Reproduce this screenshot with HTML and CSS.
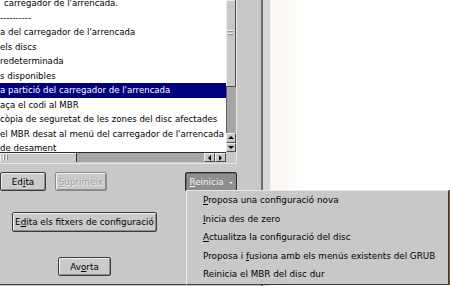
FILE: index.html
```html
<!DOCTYPE html>
<html>
<head>
	<title>Carregador de l'arrencada</title>
	<link rel="stylesheet" href="styles.css">
</head>
<body>
	<div class="window">
		<div class="left">
			<div class="listframe">
				<div class="listview">
					<div class="rows">
						<div class="row indent">carregador de l'arrencada.</div>
						<div class="row">----------</div>
						<div class="row">a del carregador de l'arrencada</div>
						<div class="row">els discs</div>
						<div class="row">redeterminada</div>
						<div class="row">s disponibles</div>
						<div class="row selected">a partició del carregador de l'arrencada</div>
						<div class="row">aça el codi al MBR</div>
						<div class="row">còpia de seguretat de les zones del disc afectades</div>
						<div class="row">el MBR desat al menú del carregador de l'arrencada</div>
						<div class="row">de desament</div>
					</div>
				</div>
				<div class="vscroll">
					<div class="vthumb"><span class="grip-h"></span></div>
					<div class="vtrough"></div>
					<div class="arrow"><span class="tri up"></span></div>
					<div class="arrow"><span class="tri down"></span></div>
				</div>
				<div class="hscroll">
					<div class="hthumb"><span class="grip-v"></span></div>
					<div class="htrough"></div>
					<div class="arrow"><span class="tri lft"></span></div>
					<div class="arrow"><span class="tri rgt"></span></div>
				</div>
				<div class="corner"></div>
			</div>
			<div class="actions">
				<div class="row-top">
					<button class="btn btn-edit">Ed<u>i</u>ta</button>
					<button class="btn btn-del" disabled><u>S</u>uprimeix</button>
					<button class="btn btn-restart"><u>R</u>einicia <span class="caret"></span></button>
				</div>
				<div class="row-mid">
					<button class="btn btn-files">E<u>d</u>ita els fitxers de configuració</button>
				</div>
				<div class="row-bottom">
					<button class="btn btn-abort">Av<u>o</u>rta</button>
				</div>
			</div>
		</div>
		<div class="sash"></div>
		<div class="pane"></div>

		<div class="menu">
			<div class="item"><u>P</u>roposa una configuració nova</div>
			<div class="item"><u>I</u>nicia des de zero</div>
			<div class="item"><u>A</u>ctualitza la configuració del disc</div>
			<div class="item">Proposa i <u>f</u>usiona amb els menús existents del GRUB</div>
			<div class="item">Reinicia el MBR del disc dur</div>
		</div>
	</div>
</body>
</html>
```

FILE: styles.css
```css
body {
	margin: 0;
	font-family: "DejaVu Sans", sans-serif;
	font-size: 8.8px;
	color: #000;
	overflow: hidden;
}
.window {
	position: relative;
	display: flex;
	width: 450px;
	height: 286px;
	background-color: #c8c8c8;
	overflow: hidden;
}
.left {
	width: 261px;
	display: flex;
	flex-direction: column;
	border-bottom: 1px solid #3c3c3c;
	box-sizing: border-box;
	height: 285px;
}
.listframe {
	display: grid;
	grid-template-columns: 226px 10px;
	grid-template-rows: 152px 10px;
	width: 236px;
	border-right: 1px solid #e6e6e6;
	border-bottom: 1px solid #e6e6e6;
	padding-bottom: 1px;
}
.listview {
	background-color: #fff;
	overflow: hidden;
}
.rows {
	margin-top: -4px;
}
.row {
	height: 14.5px;
	line-height: 14.5px;
	font-size: 8.6px;
	white-space: nowrap;
	overflow: hidden;
}
.row.indent {
	padding-left: 4px;
}
.row.selected {
	background-color: #000080;
	color: #fff;
}

/* scrollbars */
.vscroll {
	display: flex;
	flex-direction: column;
	background-color: #a6a6a6;
}
.vthumb {
	height: 87px;
	background-color: #c8c8c8;
	border-right: 1px solid #505050;
	border-bottom: 1px solid #505050;
	box-shadow: inset 1px 1px #eeeeee;
	display: flex;
	justify-content: center;
	box-sizing: border-box;
}
.grip-h {
	margin-top: 30px;
	width: 5px;
	height: 6px;
	background: repeating-linear-gradient(to bottom, #f4f4f4 0 1px, #8a8a8a 1px 2px, #c8c8c8 2px 3px);
}
.vtrough {
	flex: 1;
	border-left: 1px solid #606060;
}
.hscroll {
	display: flex;
	background-color: #a6a6a6;
	border-top: 1px solid #2c2c2c;
}
.hthumb {
	width: 77px;
	background-color: #c8c8c8;
	border-right: 1px solid #303030;
	box-shadow: inset 1px 1px #eeeeee;
	box-sizing: border-box;
}
.grip-v {
	display: block;
	margin: 2px 0 0 3px;
	width: 6px;
	height: 5px;
	background: repeating-linear-gradient(to right, #f4f4f4 0 1px, #8a8a8a 1px 2px, #c8c8c8 2px 3px);
}
.htrough {
	flex: 1;
}
.arrow {
	width: 10px;
	height: 10px;
	box-sizing: border-box;
	background-color: #c8c8c8;
	border: 1px solid #505050;
	border-top-color: #f0f0f0;
	border-left-color: #f0f0f0;
	display: flex;
	align-items: center;
	justify-content: center;
}
.vscroll .arrow {
	width: 10px;
	height: 9.5px;
}
.hscroll .arrow {
	width: 11px;
	height: 9px;
}
.tri {
	width: 0;
	height: 0;
	border: 3px solid transparent;
}
.tri.up {
	border-bottom-color: #000;
	margin-top: -3px;
}
.tri.down {
	border-top-color: #000;
	margin-bottom: -3px;
}
.tri.lft {
	border-right-color: #000;
	margin-left: -3px;
}
.tri.rgt {
	border-left-color: #000;
	margin-right: -3px;
}
.corner {
	background-color: #c8c8c8;
}

/* buttons */
.actions {
	flex: 1;
	display: flex;
	flex-direction: column;
}
.btn {
	font-family: "DejaVu Sans", sans-serif;
	font-size: 8.8px;
	color: #000;
	background-color: #cacaca;
	border: 1px solid #3a3a3a;
	border-radius: 2px;
	box-shadow: inset 1px 1px #f2f2f2, inset -1px -1px #8e8e8e;
	padding: 0;
	height: 19px;
	box-sizing: border-box;
}
.btn u {
	text-decoration-thickness: 1px;
}
.row-top {
	display: flex;
	padding-top: 8px;
}
.btn-edit {
	width: 46px;
}
.btn-del {
	margin-left: 9px;
	width: 52px;
	color: #a0a0a0;
	text-shadow: 1px 1px #ececec;
	border-color: #8a8a8a;
}
.btn-restart {
	margin-left: auto;
	margin-right: 24px;
	width: 52px;
	background-color: #8e8e8e;
	color: #f2f2f2;
	border-color: #2c2c2c;
	box-shadow: inset 1px 1px #6a6a6a;
	border-radius: 2px 2px 0 0;
}
.caret {
	display: inline-block;
	width: 0;
	height: 0;
	margin-left: 2px;
	vertical-align: 1px;
	border: 2.5px solid transparent;
	border-top-color: #f2f2f2;
	border-bottom: 0;
}
.row-mid {
	display: flex;
	padding-top: 21px;
}
.btn-files {
	margin-left: 12px;
	width: 145px;
	height: 20px;
}
.row-bottom {
	display: flex;
	padding-top: 25px;
}
.btn-abort {
	margin-left: 58px;
	width: 53px;
}

/* right side */
.sash {
	width: 7px;
	border-left: 2px solid #6e6e6e;
	background-color: #d6d6d6;
}
.pane {
	flex: 1;
	background: linear-gradient(to right, #fbf6f1, #fefdfc 30px, #fff 40px);
}

/* popup menu */
.menu {
	position: absolute;
	left: 186px;
	top: 190px;
	width: 263px;
	height: 95px;
	box-sizing: border-box;
	background-color: #c8c8c8;
	border: 1px solid #3c3c3c;
	border-top-color: #e8e8e8;
	border-left-color: #e8e8e8;
	box-shadow: 1px 0 #8a5a30;
}
.item {
	height: 18.5px;
	line-height: 18.5px;
	padding-left: 16px;
	white-space: nowrap;
}
```
